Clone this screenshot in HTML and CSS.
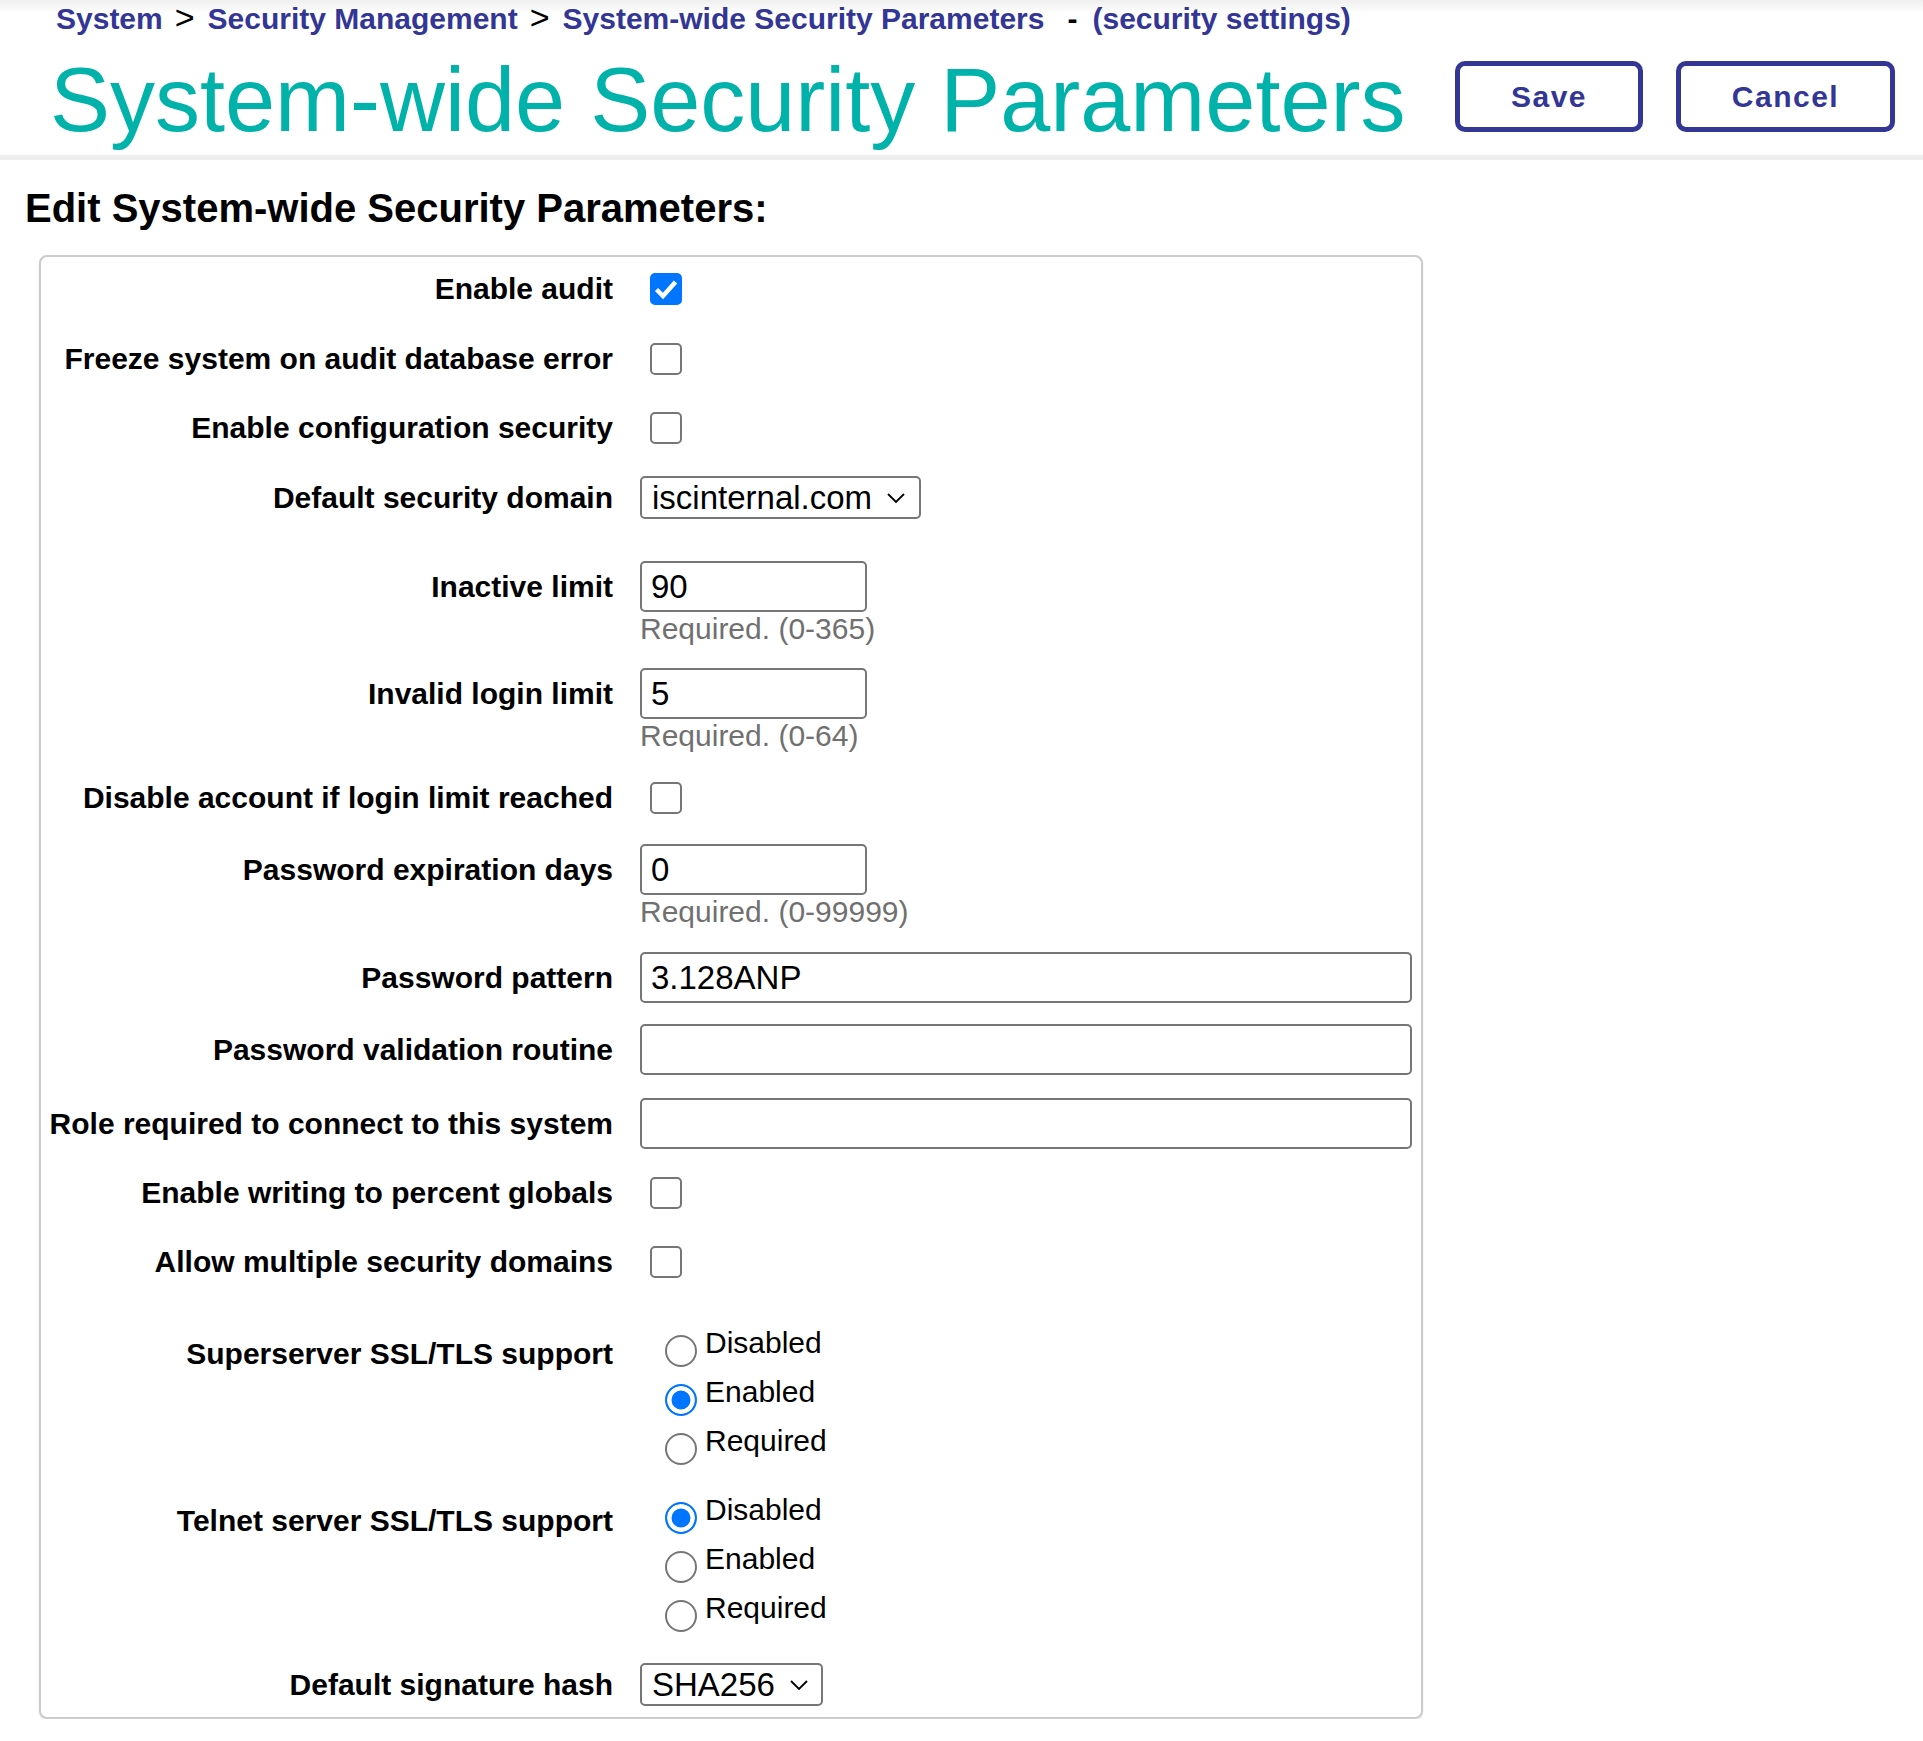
FILE: index.html
```html
<!DOCTYPE html>
<html lang="en">
<head>
<meta charset="utf-8">
<title>System-wide Security Parameters</title>
<link rel="stylesheet" href="styles.css">
</head>
<body>
<header class="header">
  <nav class="breadcrumb">
    <a class="crumb">System</a><span class="sep">&gt;</span><a class="crumb">Security Management</a><span class="sep">&gt;</span><a class="crumb">System-wide Security Parameters</a><span class="dash">-</span><span class="crumb">(security settings)</span>
  </nav>
  <div class="titlebar">
    <h1 class="title">System-wide Security Parameters</h1>
    <div class="actions">
      <button type="button" class="btn btn-save">Save</button>
      <button type="button" class="btn btn-cancel">Cancel</button>
    </div>
  </div>
</header>

<main class="content">
  <h2 class="section-title">Edit System-wide Security Parameters:</h2>
  <form class="panel">
    <div class="row">
      <label class="lbl lbl-cb">Enable audit</label>
      <div class="ctl"><span class="cb"><input type="checkbox" checked><svg class="tick" viewBox="0 0 32 32"><polyline points="6.5,16.5 13,23 25.5,9"/></svg></span></div>
    </div>
    <div class="row m38">
      <label class="lbl lbl-cb">Freeze system on audit database error</label>
      <div class="ctl"><span class="cb"><input type="checkbox"></span></div>
    </div>
    <div class="row m37">
      <label class="lbl lbl-cb">Enable configuration security</label>
      <div class="ctl"><span class="cb"><input type="checkbox"></span></div>
    </div>
    <div class="row m32">
      <label class="lbl lbl-sel">Default security domain</label>
      <div class="ctl"><span class="sel"><select class="sel-domain"><option>iscinternal.com</option></select><svg class="chev" viewBox="0 0 18 10"><polyline points="1,1 9,9 17,1"/></svg></span></div>
    </div>
    <div class="row m42">
      <label class="lbl lbl-txt">Inactive limit</label>
      <div class="ctl"><input class="txt" type="text" value="90"><div class="hint">Required. (0-365)</div></div>
    </div>
    <div class="row m22">
      <label class="lbl lbl-txt">Invalid login limit</label>
      <div class="ctl"><input class="txt" type="text" value="5"><div class="hint">Required. (0-64)</div></div>
    </div>
    <div class="row m29">
      <label class="lbl lbl-cb">Disable account if login limit reached</label>
      <div class="ctl"><span class="cb"><input type="checkbox"></span></div>
    </div>
    <div class="row m30">
      <label class="lbl lbl-txt">Password expiration days</label>
      <div class="ctl"><input class="txt" type="text" value="0"><div class="hint">Required. (0-99999)</div></div>
    </div>
    <div class="row m23">
      <label class="lbl lbl-txt">Password pattern</label>
      <div class="ctl"><input class="txt wide" type="text" value="3.128ANP"></div>
    </div>
    <div class="row m21">
      <label class="lbl lbl-txt">Password validation routine</label>
      <div class="ctl"><input class="txt wide" type="text" value=""></div>
    </div>
    <div class="row m23">
      <label class="lbl lbl-txt">Role required to connect to this system</label>
      <div class="ctl"><input class="txt wide" type="text" value=""></div>
    </div>
    <div class="row m28">
      <label class="lbl lbl-cb">Enable writing to percent globals</label>
      <div class="ctl"><span class="cb"><input type="checkbox"></span></div>
    </div>
    <div class="row m37">
      <label class="lbl lbl-cb">Allow multiple security domains</label>
      <div class="ctl"><span class="cb"><input type="checkbox"></span></div>
    </div>
    <div class="row m48">
      <label class="lbl lbl-radio">Superserver SSL/TLS support</label>
      <div class="ctl radios">
        <label class="opt"><input type="radio" name="ss">Disabled</label>
        <label class="opt"><input type="radio" name="ss" checked>Enabled</label>
        <label class="opt"><input type="radio" name="ss">Required</label>
      </div>
    </div>
    <div class="row m20">
      <label class="lbl lbl-radio">Telnet server SSL/TLS support</label>
      <div class="ctl radios">
        <label class="opt"><input type="radio" name="tn" checked>Disabled</label>
        <label class="opt"><input type="radio" name="tn">Enabled</label>
        <label class="opt"><input type="radio" name="tn">Required</label>
      </div>
    </div>
    <div class="row m23">
      <label class="lbl lbl-sel">Default signature hash</label>
      <div class="ctl"><span class="sel"><select class="sel-hash"><option>SHA256</option></select><svg class="chev chev-hash" viewBox="0 0 18 10"><polyline points="1,1 9,9 17,1"/></svg></span></div>
    </div>
  </form>
</main>
</body>
</html>
```

FILE: styles.css
```css
html, body {
  margin: 0;
  padding: 0;
  background: #fff;
}

body {
  font-family: "Liberation Sans", Arial, sans-serif;
  color: #000;
}

/* ---------- header ---------- */
.header {
  background: linear-gradient(#efefef 0, #ffffff 14px);
  border-bottom: 5px solid #eeeeee;
}

.breadcrumb {
  display: flex;
  align-items: baseline;
  height: 34px;
  padding-left: 56px;
  font-size: 30px;
  line-height: 34px;
  font-weight: bold;
  white-space: nowrap;
}

.crumb {
  color: #333695;
}

.sep {
  font-weight: normal;
  font-size: 34px;
  line-height: 34px;
  color: #000;
  margin: 0 13px 0 12px;
}

.dash {
  color: #000;
  margin: 0 15px 0 23px;
}

.titlebar {
  display: flex;
  align-items: flex-start;
  padding-bottom: 5px;
}

.title {
  margin: 16px 0 0 0;
  padding-left: 50px;
  font-size: 90px;
  line-height: 100px;
  font-weight: normal;
  color: #00b2a9;
  white-space: nowrap;
}

.actions {
  margin-left: auto;
  margin-top: 27px;
  padding-right: 28px;
  display: flex;
  gap: 33px;
}

.btn {
  box-sizing: border-box;
  height: 71px;
  border: 5px solid #333695;
  border-radius: 10px;
  background: #fff;
  color: #333695;
  font-family: "Liberation Sans", Arial, sans-serif;
  font-weight: bold;
  font-size: 30px;
  letter-spacing: 1.5px;
  padding: 0;
}

.btn-save {
  width: 188px;
}

.btn-cancel {
  width: 219px;
}

/* ---------- content ---------- */
.section-title {
  margin: 25px 0 0 0;
  padding-left: 25px;
  font-size: 40px;
  line-height: 46px;
  font-weight: bold;
}

.panel {
  box-sizing: border-box;
  width: 1384px;
  margin: 24px 0 0 39px;
  border: 2px solid #cbcbcb;
  border-radius: 8px;
  padding: 16px 0 11px 0;
  box-shadow: 0 1px 2px rgba(0, 0, 0, 0.12);
}

.row {
  display: grid;
  grid-template-columns: 572px auto;
  column-gap: 27px;
  align-items: start;
}

.m20 { margin-top: 20px; }
.m21 { margin-top: 21px; }
.m22 { margin-top: 22px; }
.m23 { margin-top: 23px; }
.m28 { margin-top: 28px; }
.m29 { margin-top: 29px; }
.m30 { margin-top: 30px; }
.m32 { margin-top: 32px; }
.m37 { margin-top: 37px; }
.m38 { margin-top: 38px; }
.m42 { margin-top: 42px; }
.m48 { margin-top: 48px; }

.lbl {
  text-align: right;
  font-weight: bold;
  font-size: 30px;
  white-space: nowrap;
}

.lbl-cb { line-height: 32px; }
.lbl-sel { line-height: 43px; }
.lbl-txt { line-height: 51px; }
.lbl-radio { padding-top: 10px; line-height: 36px; }

.ctl {
  display: flex;
  flex-direction: column;
  align-items: flex-start;
}

/* checkbox */
.cb {
  position: relative;
  display: block;
  width: 32px;
  height: 32px;
  margin-left: 10px;
}

.cb input {
  appearance: none;
  -webkit-appearance: none;
  box-sizing: border-box;
  display: block;
  width: 32px;
  height: 32px;
  margin: 0;
  border: 2.5px solid #767676;
  border-radius: 5px;
  background: #fff;
}

.cb input:checked {
  background: #0075ff;
  border-color: #0075ff;
}

.tick {
  position: absolute;
  left: 0;
  top: 0;
  width: 32px;
  height: 32px;
  fill: none;
  stroke: #fff;
  stroke-width: 4.5;
  pointer-events: none;
}

/* text inputs */
.txt {
  box-sizing: border-box;
  width: 227px;
  height: 51px;
  margin: 0;
  padding: 0 9px;
  border: 2px solid #767676;
  border-radius: 5px;
  font-family: "Liberation Sans", Arial, sans-serif;
  font-size: 33px;
  color: #000;
  background: #fff;
}

.txt.wide {
  width: 772px;
}

.hint {
  font-size: 30px;
  line-height: 34px;
  color: #707070;
}

/* selects */
.sel {
  position: relative;
  display: block;
}

.sel select {
  appearance: none;
  -webkit-appearance: none;
  box-sizing: border-box;
  display: block;
  height: 43px;
  margin: 0;
  padding: 0 0 0 10px;
  border: 2px solid #767676;
  border-radius: 5px;
  background: #fff;
  color: #000;
  font-family: "Liberation Sans", Arial, sans-serif;
  font-size: 33px;
}

.sel-domain { width: 281px; }
.sel-hash { width: 183px; }

.chev {
  position: absolute;
  right: 16px;
  top: 17px;
  width: 18px;
  height: 10px;
  fill: none;
  stroke: #000;
  stroke-width: 1.8;
  pointer-events: none;
}

.chev-hash {
  right: 15px;
}

/* radios */
.radios {
  display: flex;
  flex-direction: column;
}

.opt {
  display: flex;
  align-items: flex-start;
  height: 49px;
  font-size: 30px;
  line-height: 34px;
}

.opt input {
  appearance: none;
  -webkit-appearance: none;
  box-sizing: border-box;
  flex: none;
  width: 32px;
  height: 32px;
  margin: 9px 8px 0 25px;
  border: 2.5px solid #767676;
  border-radius: 50%;
  background: #fff;
}

.opt input:checked {
  border-color: #0075ff;
  background: #0075ff;
  box-shadow: inset 0 0 0 4.5px #fff;
}
```
